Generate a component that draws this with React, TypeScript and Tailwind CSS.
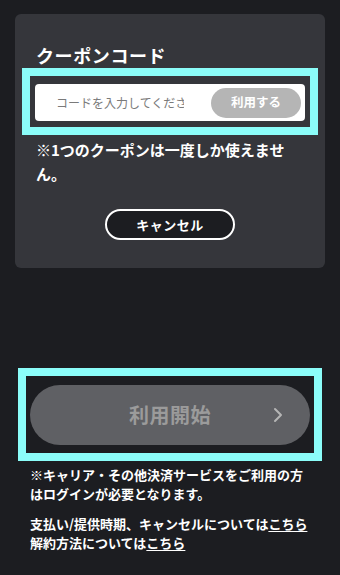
const App = () => {
    return (
        <div className="w-[340px] h-[575px] overflow-hidden bg-[#1c1d21] font-['Noto_Sans_CJK_JP',sans-serif] text-white">
            <div className="px-[15px] pt-[14px]">
                {/* coupon card */}
                <div className="bg-[#35363b] rounded-[6px] pt-[28px] pb-[28px]">
                    <h2 className="px-[21px] text-[18px] leading-[26px] font-bold tracking-[0.6px]">クーポンコード</h2>
                    <div className="mx-[7px] border-[8px] border-[#8bfdf9] px-[5px] pt-[8px] pb-[6px]">
                        <div className="flex items-center justify-between h-[37px] bg-white rounded-[4px]">
                            <input
                                type="text"
                                placeholder="コードを入力してください"
                                className="w-[149px] pl-[21px] pr-0 bg-transparent text-[12px] text-[#333] placeholder:text-[#7a7a7a] outline-none"
                            />
                            <button className="mr-[4px] w-[90px] h-[30px] rounded-full bg-[#b5b5b5] text-[12.5px] font-bold text-white">
                                利用する
                            </button>
                        </div>
                    </div>
                    <div className="px-[21px] mt-[3px]">
                        <p className="max-w-[255px] text-[15px] leading-[24px] font-bold">※1つのクーポンは一度しか使えません。</p>
                    </div>
                    <button className="block mx-auto mt-[23px] w-[130px] h-[31px] rounded-full border-2 border-white bg-[#1c1d21] text-[13px] font-bold tracking-[0.5px]">
                        キャンセル
                    </button>
                </div>
            </div>

            {/* start button */}
            <div className="mx-[18px] mt-[100px] border-[8px] border-[#8bfdf9] px-[4px] pt-[9px] pb-[8px]">
                <button className="relative flex items-center justify-center w-full h-[60px] rounded-full bg-[#5f6064]">
                    <span className="text-[20px] font-bold text-[#9b9b9b] tracking-[0.5px]">利用開始</span>
                    <svg
                        viewBox="0 0 10 16"
                        fill="none"
                        stroke="currentColor"
                        strokeWidth="2"
                        strokeLinecap="round"
                        strokeLinejoin="round"
                        className="absolute right-[27px] top-1/2 -translate-y-1/2 w-[10px] h-[16px] text-[#b5b5b5]"
                    >
                        <polyline points="2,2 8,8 2,14" />
                    </svg>
                </button>
            </div>

            <div className="px-[30px] mt-[4px] text-[13px] leading-[19px] font-bold">
                <p>※キャリア・その他決済サービスをご利用の方はログインが必要となります。</p>
                <p className="mt-[11px]">
                    支払い/提供時期、キャンセルについては<a href="#" className="underline underline-offset-2">こちら</a>
                    <br />
                    解約方法については<a href="#" className="underline underline-offset-2">こちら</a>
                </p>
            </div>
        </div>
    );
};

export default App;
